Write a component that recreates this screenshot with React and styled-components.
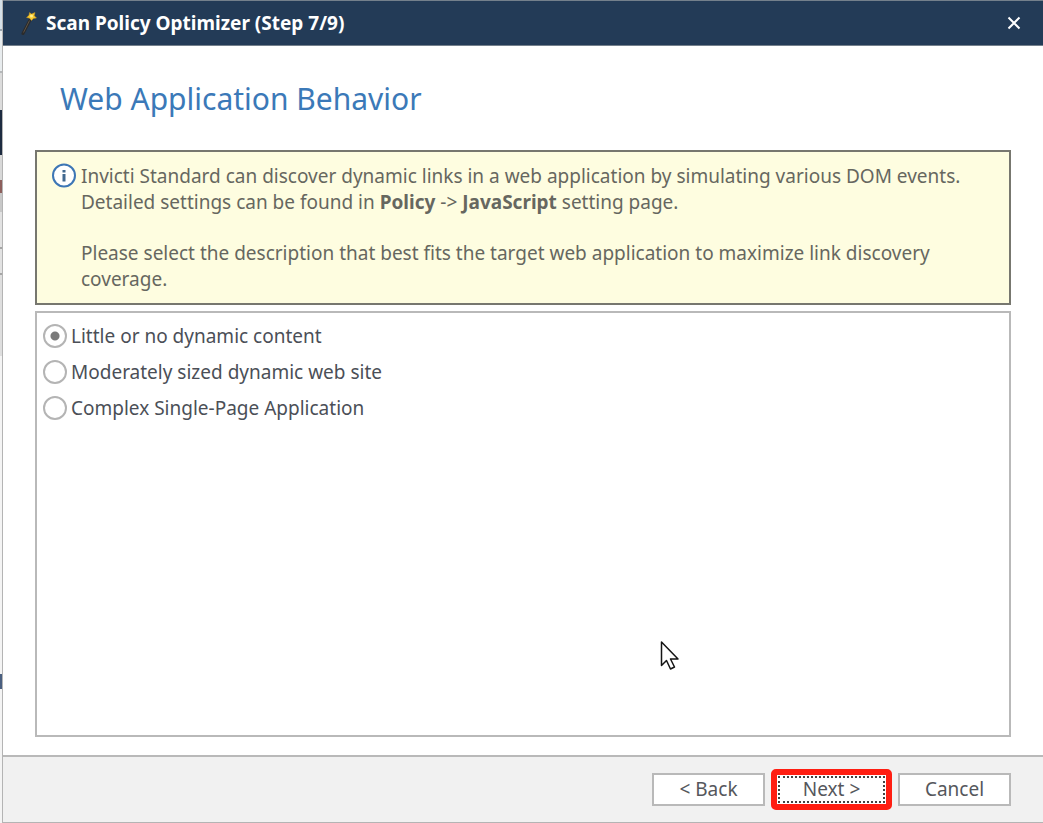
import React, { useState } from 'react'
import styled, { createGlobalStyle } from 'styled-components'

const GlobalStyle = createGlobalStyle`
  * {
    box-sizing: border-box;
  }

  body {
    margin: 0;
    background: #fff;
    font-family: "Noto Sans", "Open Sans", sans-serif;
    font-size: 19px;
    color: #55575c;
  }
`

const Screen = styled.div`
  display: flex;
  min-height: 100vh;
`

/* what is left visible of the window behind the dialog */
const Behind = styled.div`
  flex: 0 0 2px;
  background: linear-gradient(
    #d5e0e8 0 29px, #9aa5ad 29px 31px, #e8ecee 31px 71px, #b5b8ba 71px 73px,
    #dcdcdc 73px 110px, #1d2b40 110px 155px, #d8d8d8 155px 180px,
    #8d5f5c 180px 193px, #c8c8c8 193px 212px, #e2e2e2 212px 247px,
    #a5a5a5 247px 249px, #e2e2e2 249px 273px, #a5a5a5 273px 275px,
    #dedede 275px 356px, #f4f4f4 356px 674px, #4a5f80 674px 689px, #f4f4f4 689px
  );
`

const Dialog = styled.form`
  flex: 1;
  display: flex;
  flex-direction: column;
  border: solid #b4b4b4;
  border-width: 0 0 1px 1px;
`

const TitleBar = styled.header`
  display: flex;
  align-items: center;
  height: 46px;
  padding: 0 22px 0 16px;
  background: #233b57;
  border: solid #74808c;
  border-width: 1px 0;
`

const Title = styled.h1`
  flex: 1;
  margin: 0 0 0 7px;
  font-size: 19px;
  line-height: 24px;
  font-weight: 700;
  color: #fff;
`

const CloseButton = styled.button`
  display: flex;
  padding: 0;
  border: 0;
  background: transparent;
  cursor: pointer;
`

const Content = styled.main`
  flex: 1;
  display: flex;
  flex-direction: column;
  padding: 31px 32px 18px;
`

const Heading = styled.h2`
  margin: 0 0 29px 25px;
  font-size: 30px;
  line-height: 44px;
  font-weight: 400;
  color: #3b79b8;
`

const InfoBox = styled.section`
  display: flex;
  align-items: flex-start;
  gap: 4px;
  padding: 11px 32px 11px 15px;
  background: #fefde0;
  border: 2px solid #77776f;
  color: #66675f;
`

const InfoText = styled.div`
  line-height: 26px;

  p {
    margin: 0;
  }

  p + p {
    margin-top: 25px;
  }
`

const Options = styled.fieldset`
  flex: 1;
  display: flex;
  flex-direction: column;
  gap: 10px;
  margin: 6px 0 0;
  padding: 10px 6px;
  border: 2px solid #b9b9b9;
`

const Option = styled.label`
  display: flex;
  align-items: center;
  gap: 4px;
  line-height: 26px;
  color: #4b4f57;
`

const Radio = styled.input`
  appearance: none;
  width: 24px;
  height: 24px;
  margin: 0;
  border: 2px solid #b4b4b4;
  border-radius: 50%;
  background: #fff;

  &:checked {
    background: radial-gradient(circle, #7b7b7b 4px, #fff 5px);
  }
`

const Footer = styled.footer`
  display: flex;
  justify-content: flex-end;
  gap: 10px;
  padding: 16px 32px;
  background: #f1f1f1;
  border-top: 2px solid #b9b9b9;
`

const Button = styled.button`
  width: 113px;
  height: 33px;
  padding: 0 0 2px;
  border: 2px solid #b9b9b9;
  background: #fff;
  font: inherit;
  line-height: 26px;
  color: #55575c;
  cursor: pointer;
`

const DefaultButton = styled(Button)`
  position: relative;
  border-color: #fff;
  outline: 2px dotted #444;
  outline-offset: -5px;

  &::after {
    content: "";
    position: absolute;
    inset: -6px;
    border: 6px solid #ff1e12;
    border-radius: 5px;
  }
`

const Pointer = styled.svg`
  position: absolute;
  left: 660px;
  top: 640px;
`

const WandIcon = () => (
  <svg width="20" height="24" viewBox="0 0 20 24" aria-hidden="true">
    <path d="M4 22.500 11 9" stroke="#2b2b2b" strokeWidth="3" strokeLinecap="round" />
    <path d="M4.500 21.500 10.500 9.500" stroke="#5b5143" strokeWidth="1" />
    <path
      d="m10.500 1.500 2 1.500L16 1.500l-.7 3.200 2.200 2.300-3 .5L12.500 9.500l-2-2.300L7.500 6.500l2.500-2.300z"
      fill="#f7c92f"
      stroke="#b88a1d"
      strokeWidth=".5"
    />
    <circle cx="12.500" cy="5" r="1.500" fill="#fff08a" />
  </svg>
)

const CloseIcon = () => (
  <svg width="14" height="14" viewBox="0 0 14 14" aria-hidden="true">
    <path d="m1.500 1.500 11 11m0-11-11 11" stroke="#fff" strokeWidth="2" />
  </svg>
)

const InfoIcon = styled.svg`
  flex: none;
`

const choices = [
  { value: 'static', label: 'Little or no dynamic content' },
  { value: 'moderate', label: 'Moderately sized dynamic web site' },
  { value: 'spa', label: 'Complex Single-Page Application' },
]

const App = () => {
  const [behavior, setBehavior] = useState('static')

  return (
    <Screen>
      <GlobalStyle />
      <Behind />
      <Dialog onSubmit={(e) => e.preventDefault()}>
        <TitleBar>
          <WandIcon />
          <Title>Scan Policy Optimizer (Step 7/9)</Title>
          <CloseButton type="button" aria-label="Close">
            <CloseIcon />
          </CloseButton>
        </TitleBar>
        <Content>
          <Heading>Web Application Behavior</Heading>
          <InfoBox>
            <InfoIcon width="25" height="26" viewBox="0 0 25 26" aria-hidden="true">
              <circle cx="12" cy="12.500" r="11" fill="#fff" stroke="#3d76b5" strokeWidth="2" />
              <path d="M10.500 7h3v2.500h-3zM10.500 11h3v7.500h-3z" fill="#42698f" />
            </InfoIcon>
            <InfoText>
              <p>
                Invicti Standard can discover dynamic links in a web application by simulating various DOM events.
                <br />
                Detailed settings can be found in <b>Policy</b> -&gt; <b>JavaScript</b> setting page.
              </p>
              <p>
                Please select the description that best fits the target web application to maximize link discovery
                coverage.
              </p>
            </InfoText>
          </InfoBox>
          <Options aria-label="Web Application Behavior">
            {choices.map(({ value, label }) => (
              <Option key={value}>
                <Radio
                  type="radio"
                  name="behavior"
                  value={value}
                  checked={behavior === value}
                  onChange={() => setBehavior(value)}
                />
                {label}
              </Option>
            ))}
          </Options>
        </Content>
        <Footer>
          <Button type="button">&lt; Back</Button>
          <DefaultButton type="submit">Next &gt;</DefaultButton>
          <Button type="button">Cancel</Button>
        </Footer>
      </Dialog>
      <Pointer width="20" height="32" viewBox="0 0 20 32" aria-hidden="true">
        <path
          d="M1.500 2v23.500l5-5 4 8.500 4-2-4-8h7.500z"
          fill="#fff"
          stroke="#151515"
          strokeWidth="1.500"
          strokeLinejoin="round"
        />
      </Pointer>
    </Screen>
  )
}

export default App
